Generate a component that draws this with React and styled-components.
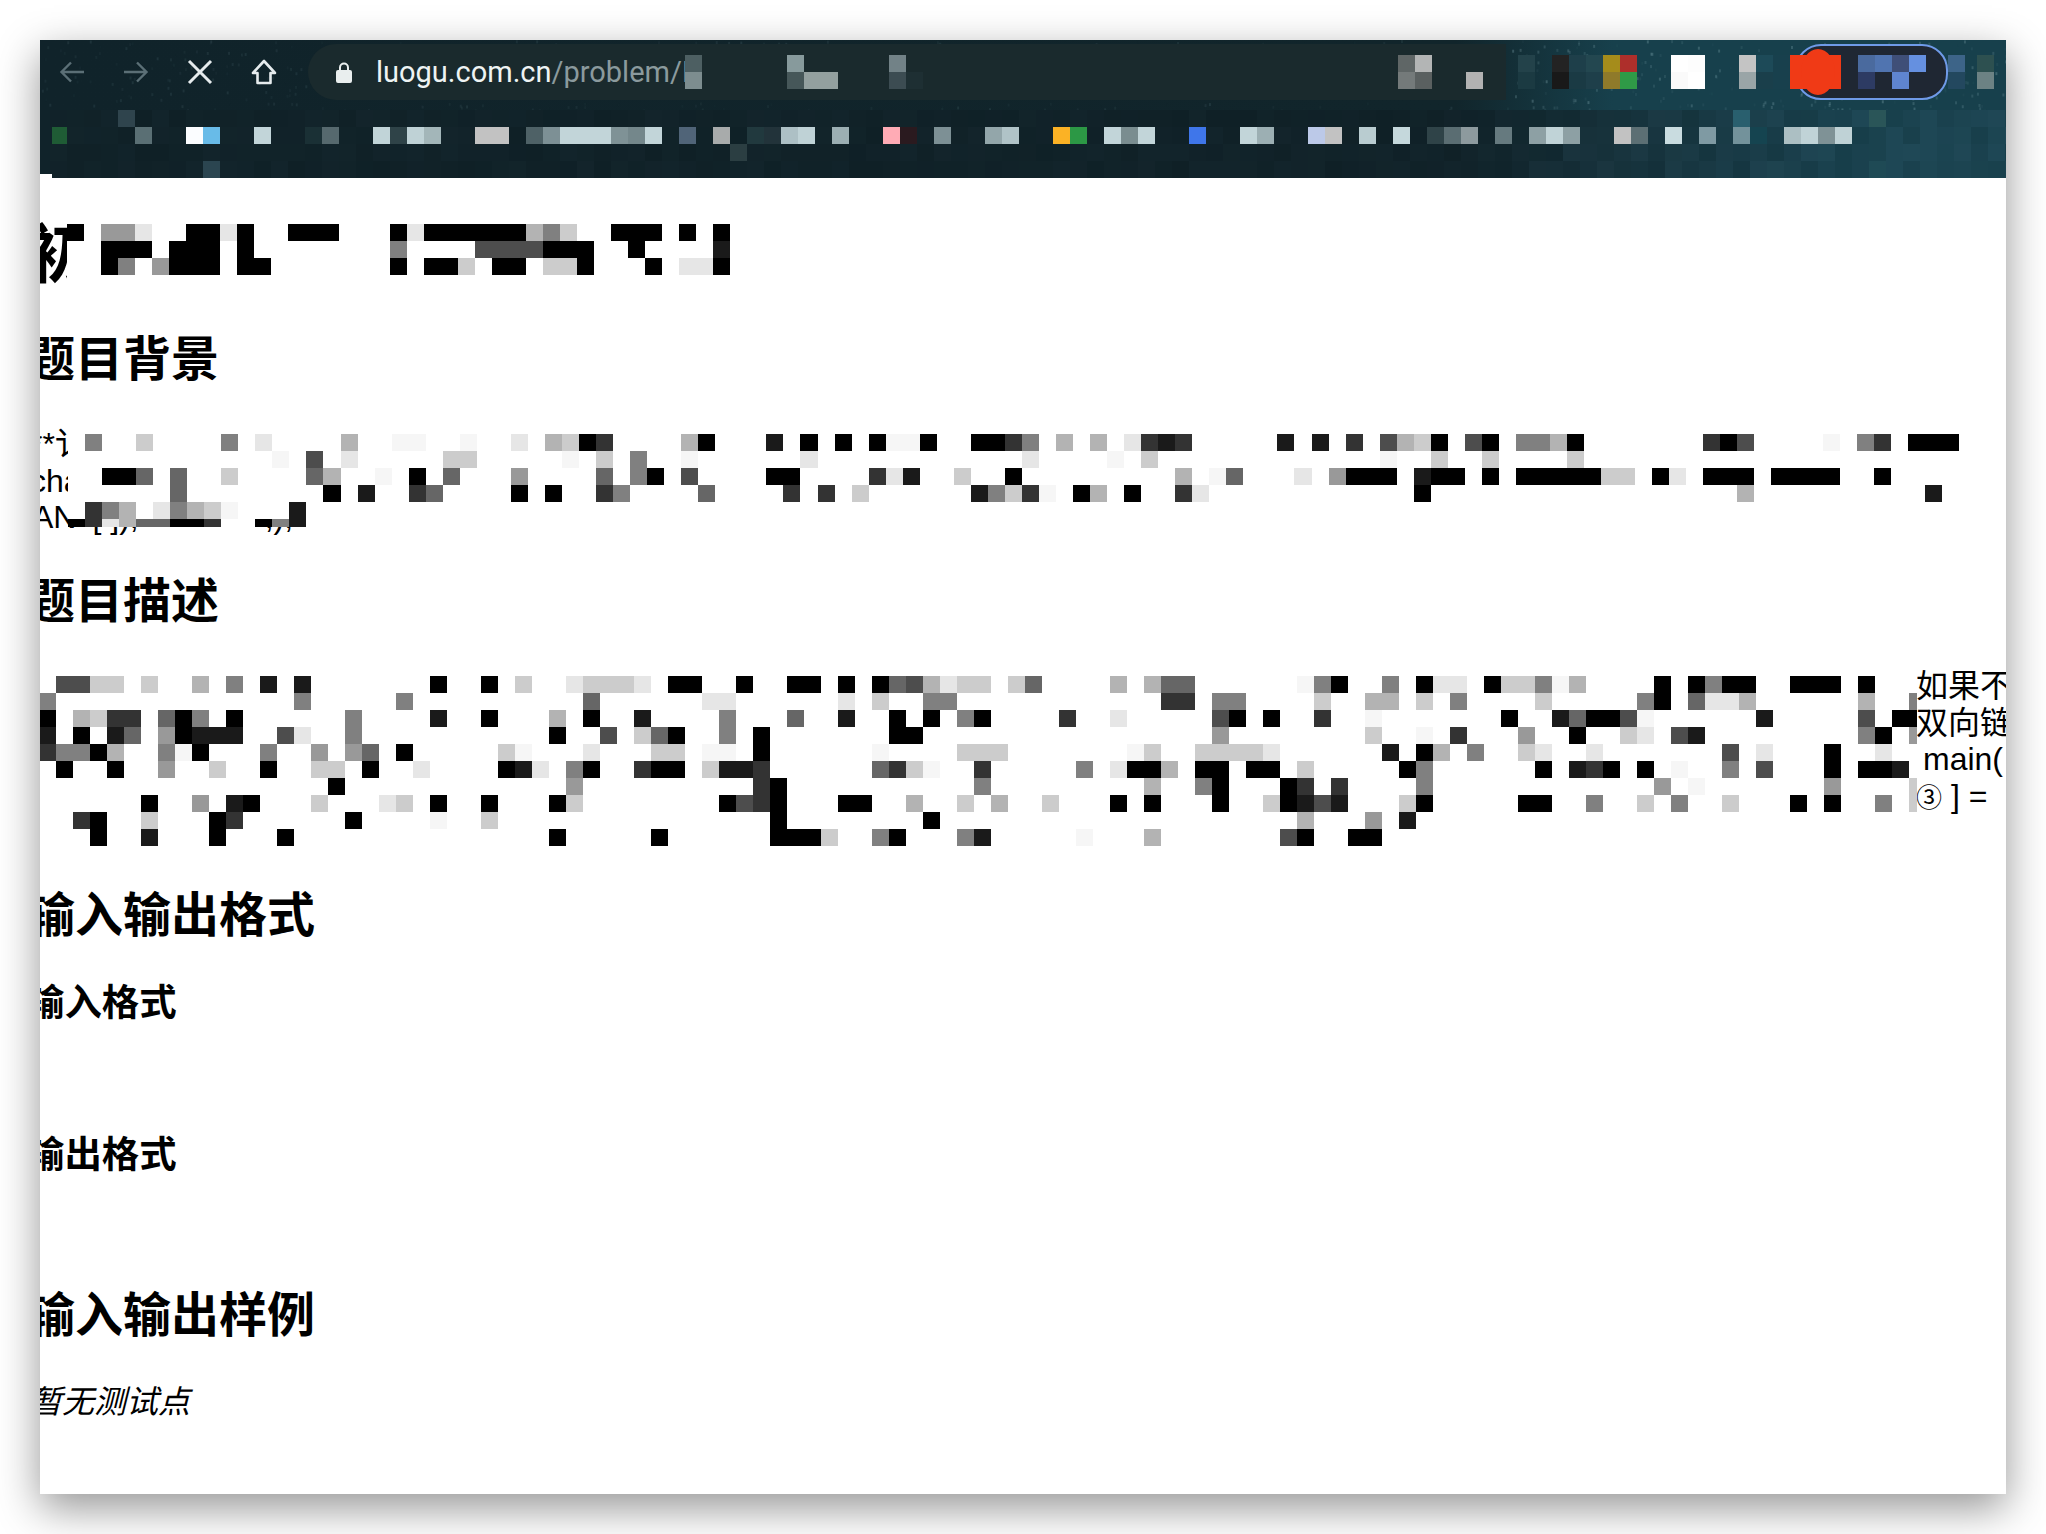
import React from "react";
import styled, { createGlobalStyle } from "styled-components";

const GlobalStyle = createGlobalStyle`
  html, body {
    margin: 0;
    padding: 0;
    background: #fff;
    height: 1534px;
    overflow: hidden;
    font-family: "Liberation Sans", "Noto Sans CJK SC", sans-serif;
  }
`;

const Page = styled.div`
  box-sizing: border-box;
  width: 2046px;
  height: 1534px;
  padding: 40px;
`;
const BrowserWindow = styled.div`
  width: 1966px;
  height: 1454px;
  background: #fff;
  overflow: hidden;
  box-shadow: 0 14px 40px rgba(0, 0, 0, 0.42);
`;

/* toolbar */
const Toolbar = styled.div`
  position: relative;
  height: 138px;
  box-sizing: border-box;
  padding-top: 4px;
  background: linear-gradient(90deg, #10232a 0%, #11252b 72%, #17404c 80%, #17404c 100%);
`;
const Texture = styled.svg`
  position: absolute;
  left: 0;
  top: 0;
`;
const NavRow = styled.div`
  position: relative;
  display: flex;
  align-items: center;
  height: 56px;
  margin-bottom: 10px;
`;
const NavButton = styled.div`
  width: 64px;
  height: 56px;
  display: flex;
  align-items: center;
  justify-content: center;
  color: ${(p) => p.$color};
`;
const AddressPill = styled.div`
  display: flex;
  align-items: center;
  width: 1198px;
  height: 56px;
  margin-left: 12px;
  padding-left: 28px;
  box-sizing: border-box;
  border-radius: 28px 0 0 28px;
  background: #1a2a2d;
`;
const UrlText = styled.div`
  width: 309px;
  margin-left: 24px;
  overflow: hidden;
  white-space: nowrap;
  font-family: Roboto, sans-serif;
  font-size: 29px;
  line-height: 34px;
  color: #eef3f3;
`;
const UrlPath = styled.span`
  color: #8b9a9d;
`;
const Cells = styled.svg`
  display: block;
  flex: none;
`;
const Chip = styled.div`
  display: flex;
  align-items: center;
  box-sizing: border-box;
  width: 153px;
  height: 56px;
  margin-left: 5px;
  border: 2px solid #6f9ae8;
  border-radius: 26px;
  background: #1f2733;
`;
const RedBadge = styled.div`
  position: relative;
  flex: none;
  width: 51px;
  height: 34px;
  margin-left: -7px;
  background: #f03a16;
  &::after {
    content: "";
    position: absolute;
    left: 11px;
    top: -6px;
    width: 34px;
    height: 46px;
    border-radius: 50%;
    background: #f03a16;
  }
`;

/* page content */
const Content = styled.div`
  color: #000;
`;
const TitleRow = styled.div`
  display: flex;
  align-items: flex-start;
  margin-top: 44px;
  height: 61px;
`;
const TitleGlyph = styled.div`
  width: 27px;
  height: 76px;
  margin-top: -5px;
  overflow: hidden;
  font-size: 64px;
  font-weight: 700;
  line-height: 76px;
  white-space: nowrap;
  text-indent: -13px;
`;
const TitleMosaic = styled.div`
  margin-top: 2px;
`;
const H2 = styled.h2`
  margin: ${(p) => p.$top}px 0 0;
  font-size: 48px;
  font-weight: 700;
  line-height: 60px;
  text-indent: -13px;
`;
const H3 = styled.h3`
  margin: ${(p) => p.$top}px 0 0;
  font-size: 37.4px;
  font-weight: 700;
  line-height: 46px;
  text-indent: -13px;
`;
const TextBlock = styled.div`
  position: relative;
  margin-top: ${(p) => p.$top}px;
  height: ${(p) => p.$height}px;
  padding-left: ${(p) => p.$indent}px;
  font-size: 32px;
  line-height: 36.6px;
  overflow: hidden;
`;
const Line = styled.div`
  white-space: nowrap;
  margin-left: ${(p) => p.$shift || 0}px;
`;
const Peek = styled.span`
  margin-left: ${(p) => p.$left}px;
`;
const Circled = styled.span`
  font-size: 26px;
`;
const MosaicOverlay = styled.div`
  position: absolute;
  left: ${(p) => p.$left}px;
  top: ${(p) => p.$top}px;
  line-height: 0;
`;
const EmptyNote = styled.p`
  margin: 38px 0 0;
  font-size: 32px;
  font-style: italic;
  line-height: 37px;
  text-indent: -10px;
`;

const GRAY = {
  0: "#000", 1: "#1a1a1a", 2: "#333", 3: "#4d4d4d", 4: "#666", 5: "#808080",
  6: "#999", 7: "#b3b3b3", 8: "#ccc", 9: "#e6e6e6", F: "#f6f6f6",
};

const titleRows = [
  "0:0 2:6 3:6 4:9 7:0 8:0 9:9 10:0 13:0 14:0 15:0 19:0 20:9 21:0 22:0 23:0 24:0 25:0 26:0 27:7 28:5 29:8 32:0 33:0 34:0 36:0 38:0",
  "2:0 3:0 4:0 6:0 7:0 8:0 10:0 19:5 24:3 25:3 26:3 27:3 28:0 29:0 30:0 33:0 38:1",
  "2:0 3:5 5:6 6:0 7:0 8:0 10:0 11:0 19:0 21:0 22:0 23:8 25:0 26:0 28:8 29:8 30:0 34:0 36:9 37:9 38:0",
];

const backgroundRows = [
  "0:5 3:8 8:5 10:9 15:7 18:F 19:F 22:F 25:9 27:7 28:8 29:0 30:2 35:7 36:0 40:1 42:0 44:0 46:0 47:F 48:F 49:0 52:0 53:0 54:2 55:5 57:7 59:7 61:9 62:2 63:1 64:2 70:1 72:1 74:2 76:3 77:7 78:8 79:0 81:3 82:0 84:5 85:5 86:7 87:0 95:2 96:0 97:3 102:F 104:5 105:2 107:0 108:0 109:0",
  "11:F 13:3 15:9 21:8 22:8 28:F 30:8 32:5 35:F 42:9 55:9 60:F 62:8 76:F 79:8 82:8 87:8",
  "1:0 2:0 3:4 5:4 8:8 13:4 14:7 17:F 19:0 21:4 25:6 30:4 32:5 33:0 35:3 40:0 41:0 46:2 47:9 48:1 51:8 54:0 64:7 66:F 67:4 71:9 73:6 74:0 75:0 76:0 78:1 79:0 80:0 82:0 84:0 85:0 86:0 87:0 88:0 89:8 90:8 92:0 93:9 95:0 96:0 97:0 99:0 100:0 101:0 102:0 105:0",
  "5:4 14:0 16:1 19:2 20:4 25:0 27:0 30:2 31:5 36:4 41:2 43:2 45:8 52:1 53:5 54:8 55:2 56:F 58:0 59:7 61:0 64:2 65:9 78:0 97:7 108:1",
  "0:2 1:5 2:7 4:9 5:5 6:7 7:8 8:F 12:1",
  "-1:0 0:2 1:9 2:7 3:4 4:4 5:0 6:0 7:2 10:0 11:5 12:1",
];

const descriptionRows = [
  "1:3 2:3 3:8 4:8 6:8 9:7 11:5 13:1 15:1 23:0 26:0 28:8 31:9 32:8 33:8 34:8 35:9 37:0 38:0 41:0 44:0 45:0 47:0 49:0 50:4 51:3 52:7 53:9 54:8 55:8 57:8 58:4 63:7 65:7 66:4 67:4 74:F 75:5 76:0 79:5 81:0 82:9 83:9 85:0 86:8 87:8 88:5 89:F 90:7 95:0 97:0 98:5 99:0 100:0 103:0 104:0 105:0 107:0",
  "0:5 15:5 21:5 32:4 39:9 40:9 47:9 49:8 52:5 53:5 66:2 67:2 69:5 70:5 75:8 78:7 79:7 81:8 83:5 88:8 94:5 95:0 97:4 98:9 99:9 100:7 107:7 110:5",
  "0:0 2:7 3:8 4:2 5:2 7:4 8:0 9:5 11:0 18:5 23:1 26:0 30:7 32:0 35:1 40:5 44:4 47:1 50:0 52:0 54:5 55:0 60:2 63:9 69:3 70:0 72:0 75:2 78:F 86:0 89:1 90:4 91:0 92:0 93:3 94:F 101:1 107:3 109:0 110:0",
  "0:1 2:0 4:1 5:4 7:6 8:0 9:1 10:1 11:1 14:3 15:9 18:5 30:0 33:3 35:8 36:4 37:0 40:5 42:0 50:0 51:0 69:6 78:8 81:F 83:2 87:6 90:0 93:8 94:9 96:3 97:1 107:5 108:0 110:6",
  "0:2 1:5 2:5 3:0 4:7 7:5 8:F 9:0 13:5 16:6 18:6 19:4 21:0 27:8 28:F 32:9 36:8 37:8 39:F 40:F 42:0 49:F 54:8 55:8 56:8 64:F 65:8 68:8 69:8 70:8 71:8 72:9 79:1 81:0 82:7 84:5 87:8 88:9 91:9 99:3 101:9 105:0 108:9",
  "1:0 4:0 7:6 10:8 13:0 16:8 17:8 19:0 22:9 27:0 28:1 29:9 31:5 32:0 35:2 36:0 37:0 39:8 40:1 41:1 42:2 49:4 50:2 51:8 52:F 55:2 61:5 63:9 64:0 65:0 66:7 68:0 69:0 71:0 72:0 74:8 80:0 81:5 88:0 90:1 91:2 92:0 94:0 96:F 99:5 101:3 105:0 107:0 108:0 109:1",
  "17:0 31:6 42:2 43:0 55:5 65:7 68:5 69:0 73:0 74:2 76:2 81:5 95:6 97:F 105:6 110:8",
  "6:0 9:6 11:1 12:0 16:8 20:9 21:8 23:0 26:0 30:0 31:8 40:0 41:3 42:2 43:0 47:0 48:0 51:7 54:8 56:7 59:8 63:0 65:0 69:0 72:8 73:0 74:1 75:3 76:1 80:8 81:0 87:0 88:0 91:5 94:8 96:5 99:8 103:0 105:0 108:5 110:8",
  "2:2 3:0 6:8 10:0 11:2 18:0 23:F 26:8 43:0 52:0 74:7 78:6 80:1",
  "3:0 6:1 10:0 14:0 30:0 36:0 43:0 44:0 45:0 46:8 49:5 50:0 54:5 55:1 61:F 65:7 73:3 74:0 77:0 78:0",
];

// bright row of the bookmarks bar: [col, colour], col 0 sits at window x 95
const bookmarkCells = [
  [-5, "#1f5c35"], [0, "#5a6f74"], [3, "#fbfdff"], [4, "#68bbe8"], [7, "#c2d5d9"], [10, "#1a3035"], [11, "#56696e"],
  [14, "#c1d4d8"], [15, "#2f4348"], [16, "#bfd2d6"], [17, "#a3b6b9"], [20, "#c2c2c2"], [21, "#c2c2c2"], [23, "#4e6166"],
  [24, "#7d9095"], [25, "#c2d5d9"], [26, "#c2d5d9"], [27, "#c2d5d9"], [28, "#7f9296"], [29, "#74878b"], [30, "#c2d5d9"],
  [32, "#506478"], [34, "#a8abab"], [36, "#21393e"], [37, "#22333a"], [38, "#adc0c5"], [39, "#bfd2d6"], [41, "#9cafb3"],
  [44, "#ffabb5"], [45, "#2a1a1f"], [47, "#7d9095"], [50, "#93a6aa"], [51, "#b0c3c7"], [54, "#fbb225"], [55, "#2c9845"],
  [57, "#c2d5d9"], [58, "#7a8d90"], [59, "#c2d5d9"], [62, "#3f76ea"], [65, "#c2d5d9"], [66, "#9cafb3"], [69, "#bcc9e8"],
  [70, "#c2c2c2"], [72, "#b9ccd0"], [74, "#c5d8dc"], [76, "#2f4348"], [77, "#5a6d72"], [78, "#8d9a9e"], [80, "#667a7f"],
  [82, "#8da0a4"], [83, "#c0d3d7"], [84, "#8da0a4"], [87, "#c2c2c2"], [88, "#5c6f74"], [90, "#c9dce0"], [92, "#7f9aa3"],
  [94, "#73929b"], [95, "#154450"], [97, "#acbfc3"], [98, "#c0d3d7"], [99, "#7f9296"], [100, "#bfd2d6"],
];

// lighter tiles outside the bright row: [x, y, colour]
const bookmarkAccents = [
  [78, 0, "#2f444d"], [1693, 0, "#295f6e"], [1829, 0, "#2a5558"], [690, 34, "#2b3e42"], [163, 51, "#2b4550"], [1829, 51, "#1f4a55"],
];

const noise = (a, b) => {
  const v = Math.sin(a * 12.9898 + b * 78.233) * 43758.5453;
  return v - Math.floor(v);
};

const mix = (t, j) => {
  const r = Math.round(15 + 8 * t + j * 8);
  const g = Math.round(32 + 30 * t + j * 10);
  const b = Math.round(38 + 36 * t + j * 12);
  return `rgb(${r},${g},${b})`;
};

function Mosaic({ rows, width, height, origin, pitch = 17 }) {
  const rects = [];
  rows.forEach((row, r) => {
    row.split(" ").forEach((item) => {
      const [col, gray] = item.split(":");
      const x = Math.round(origin + Number(col) * pitch);
      const next = Math.round(origin + (Number(col) + 1) * pitch);
      rects.push(<rect key={`${r}-${col}`} x={x} y={r * 17} width={next - x} height="17" fill={GRAY[gray]} />);
    });
  });
  return (
    <Cells width={width} height={height} shapeRendering="crispEdges">
      <rect width={width} height={height} fill="#fff" />
      {rects}
    </Cells>
  );
}

function StarTexture() {
  const dots = [];
  for (let i = 0; i < 900; i++) {
    const x = noise(i, 1) * 1966;
    const y = noise(i, 2) * 70;
    const onRight = x > 1460;
    if (!onRight && y > 3 && y < 62 && x > 268) continue;
    const alpha = (onRight ? 0.3 : 0.12) * noise(i, 3);
    dots.push(<rect key={i} x={x} y={y} width="2" height="3" fill="#8fb4bd" opacity={alpha} />);
  }
  return (
    <Texture width="1966" height="70">
      {dots}
    </Texture>
  );
}

function BookmarksBar() {
  const tiles = [];
  for (let c = -5; c < 112; c++) {
    for (let r = 0; r < 4; r++) {
      const x = 95 + c * 17;
      const t = Math.max(0, (x - 1400) / 400);
      const strength = x > 1480 ? 1 : 0.45;
      tiles.push(
        <rect key={`${c}-${r}`} x={x} y={r * 17} width="17" height="17" fill={mix(Math.min(t, 1), noise(c, r) * strength)} />
      );
    }
  }
  return (
    <Cells width="1966" height="68" shapeRendering="crispEdges">
      {tiles}
      {bookmarkAccents.map(([x, y, color]) => (
        <rect key={`${x}-${y}`} x={x} y={y} width="17" height="17" fill={color} />
      ))}
      {bookmarkCells.map(([c, color]) => (
        <rect key={c} x={95 + c * 17} y="17" width="17" height="17" fill={color} />
      ))}
      <rect x="0" y="17" width="12" height="17" fill="#10232a" />
      <rect x="0" y="64" width="12" height="4" fill="#fff" />
    </Cells>
  );
}

const pillCells = [
  [0, 0, "#4d5f62"], [0, 17, "#7d8d8f"], [102, 0, "#879a9c"], [102, 17, "#465759"], [119, 17, "#93a09f"], [136, 17, "#93a09f"],
  [204, 0, "#728287"], [204, 17, "#3c4c52"], [221, 17, "#1e2f33"], [713, 0, "#5f6666"], [713, 17, "#747a7a"],
  [730, 0, "#b3b5b5"], [730, 17, "#5a6060"], [781, 17, "#b2b2b2"],
];
const extCells = [
  [12, 0, "#23424a"], [12, 17, "#1b3a42"], [46, 0, "#232323"], [46, 17, "#191919"], [63, 0, "#1e3f4a"], [63, 17, "#1a3a44"],
  [80, 0, "#234750"], [80, 17, "#1e3f4a"], [97, 0, "#a58c1b"], [97, 17, "#8f7a2a"], [114, 0, "#ae2f2b"], [114, 17, "#2f9a47"],
  [165, 0, "#fff"], [165, 17, "#fafafa"], [182, 0, "#fdfdfd"], [182, 17, "#fff"], [233, 0, "#c4c4c4"], [233, 17, "#9aa5a7"],
  [250, 0, "#1d4a58"], [250, 17, "#1a3f4b"], [267, 0, "#18404d"], [267, 17, "#18404d"],
];
const chipCells = [
  [17, 0, "#4a6a9e"], [17, 17, "#2d3b63"], [34, 0, "#5074b0"], [51, 0, "#3f4f78"], [51, 17, "#5f85d0"], [68, 0, "#6590e0"],
];
const edgeCells = [
  [0, 0, "#3d6488"], [0, 17, "#23485f"], [29, 0, "#2d5050"], [29, 17, "#6c8284"],
];

function IconCells({ cells, width }) {
  return (
    <Cells width={width} height="34" shapeRendering="crispEdges">
      {cells.map(([x, y, color]) => (
        <rect key={`${x}-${y}`} x={x} y={y} width="17" height="17" fill={color} />
      ))}
    </Cells>
  );
}

function Arrow({ flip }) {
  return (
    <svg width="26" height="22" viewBox="0 0 26 22" fill="none" stroke="currentColor" strokeWidth="2.4">
      <g transform={flip ? "matrix(-1 0 0 1 26 0)" : undefined}>
        <path d="M25 11H3M12 1.5L2.5 11l9.5 9.5" />
      </g>
    </svg>
  );
}

function CloseIcon() {
  return (
    <svg width="26" height="26" viewBox="0 0 26 26" fill="none" stroke="currentColor" strokeWidth="3">
      <path d="M2 2l22 22M24 2L2 24" />
    </svg>
  );
}

function HomeIcon() {
  return (
    <svg width="26" height="26" viewBox="0 0 26 26" fill="none" stroke="currentColor" strokeWidth="2.6" strokeLinejoin="round">
      <path d="M13 2L2 14h4.5v10h13V14H24z" />
    </svg>
  );
}

function LockIcon() {
  return (
    <svg width="16" height="21" viewBox="0 0 16 21" fill="#e9eeee">
      <path d="M2 8h1V5.5a5 5 0 0 1 10 0V8h1a2 2 0 0 1 2 2v9a2 2 0 0 1-2 2H2a2 2 0 0 1-2-2v-9a2 2 0 0 1 2-2zm3 0h6V5.5a3 3 0 0 0-6 0z" />
    </svg>
  );
}

export default function App() {
  return (
    <Page>
      <GlobalStyle />
      <BrowserWindow>
        <Toolbar>
          <StarTexture />
          <NavRow>
            <NavButton $color="#5b6f76">
              <Arrow />
            </NavButton>
            <NavButton $color="#5b6f76">
              <Arrow flip />
            </NavButton>
            <NavButton $color="#e6ecee">
              <CloseIcon />
            </NavButton>
            <NavButton $color="#e6ecee">
              <HomeIcon />
            </NavButton>
            <AddressPill>
              <LockIcon />
              <UrlText>
                luogu.com.cn<UrlPath>/problem/P</UrlPath>
              </UrlText>
              <IconCells cells={pillCells} width="820" />
            </AddressPill>
            <IconCells cells={extCells} width="284" />
            <Chip>
              <RedBadge />
              <IconCells cells={chipCells} width="102" />
            </Chip>
            <IconCells cells={edgeCells} width="58" />
          </NavRow>
          <BookmarksBar />
        </Toolbar>
        <Content>
          <TitleRow>
            <TitleGlyph>初</TitleGlyph>
            <TitleMosaic>
              <Mosaic rows={titleRows} width="1000" height="51" origin={0} />
            </TitleMosaic>
          </TitleRow>
          <H2 $top={47}>题目背景</H2>
          <TextBlock $top={36} $height={111} $indent={0}>
            <Line $shift={-10}>**讠</Line>
            <Line $shift={-10}>cha</Line>
            <Line $shift={-8}>
              AN
              <Peek $left={16}>[ ]);</Peek>
              <Peek $left={126}>,);</Peek>
            </Line>
            <MosaicOverlay $left={28} $top={8}>
              <Mosaic rows={backgroundRows} width="1930" height="93" origin={17} pitch={17.035} />
            </MosaicOverlay>
          </TextBlock>
          <H2 $top={35}>题目描述</H2>
          <TextBlock $top={36} $height={178} $indent={1876}>
            <Line>如果不</Line>
            <Line>双向链</Line>
            <Line $shift={7}>main(</Line>
            <Line>
              <Circled>③</Circled> ] =
            </Line>
            <MosaicOverlay $left={0} $top={8}>
              <Mosaic rows={descriptionRows} width="1877" height="170" origin={-1} />
            </MosaicOverlay>
          </TextBlock>
          <H2 $top={40}>输入输出格式</H2>
          <H3 $top={34}>输入格式</H3>
          <H3 $top={106}>输出格式</H3>
          <H2 $top={108}>输入输出样例</H2>
          <EmptyNote>暂无测试点</EmptyNote>
        </Content>
      </BrowserWindow>
    </Page>
  );
}
